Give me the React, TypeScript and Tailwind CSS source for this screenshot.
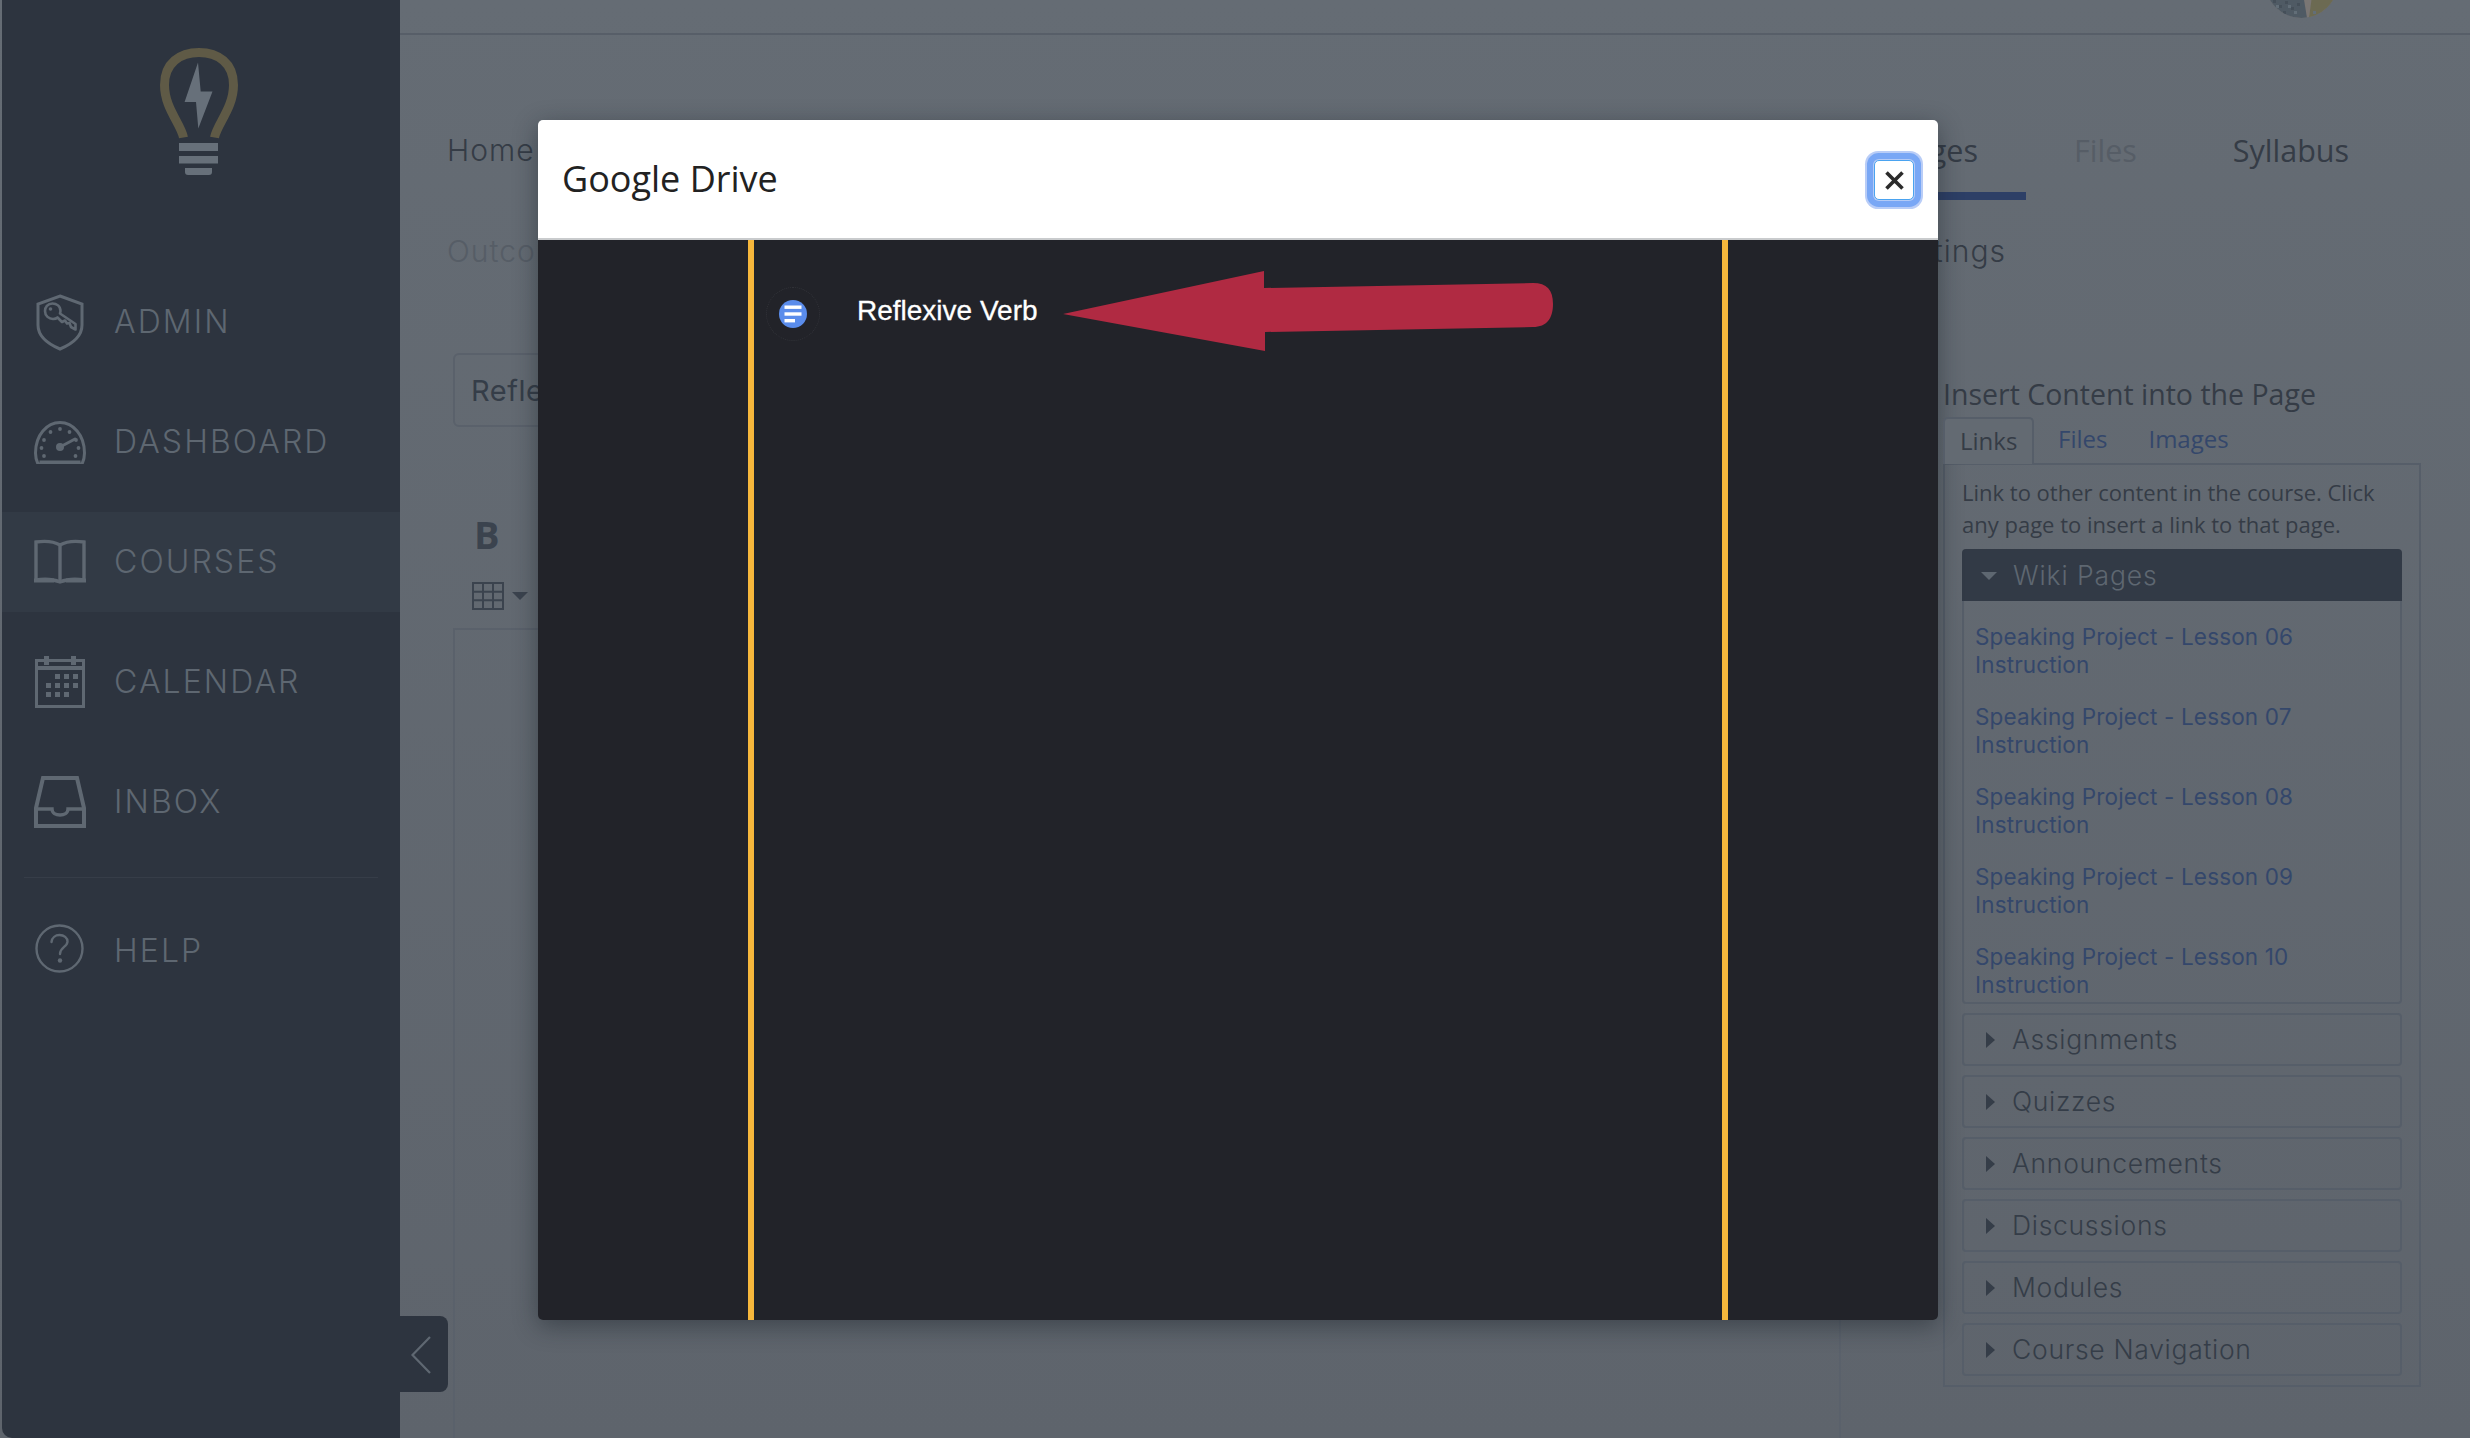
import React from "react";

const ICON = "#5f6872";

function Logo() {
  return (
    <svg width="78" height="127" viewBox="0 0 78 127" fill="none">
      <path d="M23.5 89.5C21 76 4.5 60 4.5 37C4.5 15 20 4.5 39 4.5C58 4.5 73.5 15 73.5 37C73.5 60 57 76 54.5 89.5" stroke="#5f5a46" strokeWidth="9" />
      <polygon points="38,14.5 24.6,54 36,54 38.3,80.6 52.5,43.5 40.7,43.5" fill="#67707a" />
      <rect x="19" y="95" width="39" height="8" fill="#67707a" />
      <rect x="19" y="108" width="39" height="7.5" fill="#67707a" />
      <path d="M25 120H52V124Q52 127 49 127H28Q25 127 25 124Z" fill="#67707a" />
    </svg>
  );
}

function AdminIcon() {
  return (
    <svg width="48" height="57" viewBox="0 0 48 57" fill="none" stroke={ICON} strokeWidth="3">
      <path d="M24 2L46 10V31C46 42 36 50 24 55C12 50 2 42 2 31V10Z" />
      <path d="M24.5 17C24.5 12 20.5 9.5 16.5 9.5C11.5 9.5 9 13.5 9 17C9 22 13 25 17 25C19 25 20.5 24.5 21.5 23.5L26 28L29 26.5L31 29.5L33.5 29L35 33L39.5 35.5V30L24 19.5Z" strokeWidth="2.6" strokeLinejoin="round" />
      <circle cx="14.5" cy="15" r="1.8" fill={ICON} stroke="none" />
    </svg>
  );
}

function DashIcon() {
  return (
    <svg width="52" height="43" viewBox="0 0 52 43" fill="none">
      <path d="M4 43C2 39 1.5 36 1.5 32C1.5 14 13 1.5 26 1.5C39 1.5 50.5 14 50.5 32C50.5 36 50 39 48 43Z" stroke={ICON} strokeWidth="3" strokeLinejoin="round" />
      <path d="M5.5 41H46.5" stroke={ICON} strokeWidth="3" />
      <g fill={ICON}>
        <circle cx="10" cy="19" r="1.9" /><circle cx="7.5" cy="27" r="1.9" /><circle cx="10" cy="35" r="1.9" />
        <circle cx="16.5" cy="11" r="1.9" /><circle cx="26" cy="8" r="1.9" /><circle cx="35.5" cy="11" r="1.9" />
        <circle cx="42" cy="19" r="1.9" /><circle cx="44.5" cy="27" r="1.9" /><circle cx="41.5" cy="35" r="1.9" />
        <circle cx="26" cy="26" r="4" />
      </g>
      <path d="M26 26L41 18" stroke={ICON} strokeWidth="3" strokeLinecap="round" />
    </svg>
  );
}

function BookIcon() {
  return (
    <svg width="52" height="46" viewBox="0 0 52 46" fill="none" stroke={ICON} strokeWidth="3.4">
      <path d="M26 6C20 2.5 12 1.5 2 3V41C12 39.5 20 40.5 26 43C32 40.5 40 39.5 50 41V3C40 1.5 32 2.5 26 6Z" />
      <path d="M26 6V44" />
      <path d="M0 41.5H20M32 41.5H52" strokeWidth="4" />
    </svg>
  );
}

function CalendarIcon() {
  const dots: [number, number][] = [
    [20, 18], [29, 18], [38, 18], [11, 27], [20, 27], [29, 27], [38, 27], [11, 36], [20, 36], [29, 36],
  ];
  return (
    <svg width="50" height="52" viewBox="0 0 50 52" fill="none">
      <rect x="1.5" y="4.5" width="47" height="46" stroke={ICON} strokeWidth="3" />
      <path d="M2 12H48" stroke={ICON} strokeWidth="4" />
      <rect x="9" y="0" width="5" height="9" fill={ICON} />
      <rect x="36" y="0" width="5" height="9" fill={ICON} />
      {dots.map(([x, y]) => (
        <rect key={`${x}-${y}`} x={x} y={y} width="5" height="5" fill={ICON} />
      ))}
    </svg>
  );
}

function InboxIcon() {
  return (
    <svg width="52" height="52" viewBox="0 0 52 52" fill="none" stroke={ICON} strokeWidth="4">
      <path d="M9 2H43L50 32V50H2V32Z" strokeLinejoin="miter" />
      <path d="M3 33H18C18 41 34 41 34 33H49" strokeWidth="3.4" />
    </svg>
  );
}

function HelpIcon() {
  return (
    <svg className="-translate-x-px -translate-y-[3px]" width="49" height="49" viewBox="0 0 49 49" fill="none" stroke={ICON} strokeWidth="2.4">
      <circle cx="24.5" cy="24.5" r="23" />
      <path d="M16.5 18C17 13.5 20.5 11 24.5 11C29 11 32.5 13.8 32.5 17.5C32.5 23 25 23 25 30" strokeLinecap="round" />
      <circle cx="25" cy="36.5" r="2.2" fill={ICON} stroke="none" />
    </svg>
  );
}

const navItems = [
  { label: "ADMIN", icon: <AdminIcon />, active: false },
  { label: "DASHBOARD", icon: <DashIcon />, active: false },
  { label: "COURSES", icon: <BookIcon />, active: true },
  { label: "CALENDAR", icon: <CalendarIcon />, active: false },
  { label: "INBOX", icon: <InboxIcon />, active: false },
];

function NavRow({ label, icon, active }: { label: string; icon: React.ReactNode; active?: boolean }) {
  return (
    <div className={`flex h-[100px] items-center pl-[32px] ${active ? "bg-[#323a45]" : ""}`}>
      <span className="flex w-[52px] justify-center">{icon}</span>
      <span className="ml-[28px] font-['Inter',sans-serif] text-[32px] font-light tracking-[2.1px] text-[#5e6771]">{label}</span>
    </div>
  );
}

function Sidebar() {
  return (
    <aside className="ml-[2px] flex h-full w-[398px] shrink-0 flex-col rounded-bl-[10px] bg-[#2d343f]">
      <div className="flex justify-center pt-[48px] pr-[4px]">
        <Logo />
      </div>
      <nav className="mt-[97px] flex flex-col gap-[20px]">
        {navItems.map((n) => (
          <NavRow key={n.label} {...n} />
        ))}
      </nav>
      <div className="mx-[22px] mt-[25px] h-px bg-[#363d48]" />
      <div className="mt-[23px]">
        <NavRow label="HELP" icon={<HelpIcon />} />
      </div>
    </aside>
  );
}

function Avatar() {
  return (
    <div className="-mt-[55px] h-[73px] w-[73px] overflow-hidden rounded-full">
      <svg width="73" height="73" viewBox="0 0 73 73">
        <rect width="73" height="73" fill="#7a7674" />
        <path d="M0 0H30L42 73H0Z" fill="#4f5a64" />
        <path d="M54 0H73V73H44Z" fill="#6c6a52" />
        <g fill="#454f59">
          <rect x="8" y="55" width="3" height="3" /><rect x="14" y="60" width="3" height="3" /><rect x="20" y="56" width="3" height="3" />
          <rect x="26" y="62" width="3" height="3" /><rect x="32" y="58" width="3" height="3" /><rect x="18" y="66" width="3" height="3" />
        </g>
        <g fill="#626e78">
          <rect x="11" y="60" width="3" height="3" /><rect x="23" y="60" width="3" height="3" /><rect x="29" y="66" width="3" height="3" />
          <rect x="48" y="66" width="3" height="3" />
        </g>
      </svg>
    </div>
  );
}

const wikiPages = ["06", "07", "08", "09", "10"];
const collapsed = ["Assignments", "Quizzes", "Announcements", "Discussions", "Modules", "Course Navigation"];

function InsertPanel() {
  return (
    <section className="flex w-[478px] flex-col pt-[72px] font-['Open_Sans',sans-serif]">
      <h2 className="h-[45px] text-[28.5px] leading-[45px] text-[#353c46]">Insert Content into the Page</h2>
      <div className="flex h-[46px] text-[24px] leading-[44px]">
        <span className="z-10 h-[47px] w-[91px] rounded-t-[5px] border-x-2 border-t-2 border-[#565e69] bg-[#636a72] pl-[15px] text-[#353c46]">Links</span>
        <span className="ml-[24px] text-[#34476b]">Files</span>
        <span className="ml-[41px] text-[#34476b]">Images</span>
      </div>
      <div className="flex h-[924px] flex-col border-2 border-[#565e69] px-[17px] pt-[11px]">
        <p className="h-[73px] text-[22px] leading-[32px] whitespace-nowrap text-[#353c46]">
          Link to other content in the course. Click
          <br />
          any page to insert a link to that page.
        </p>
        <div className="flex h-[52px] items-center rounded-t-[4px] bg-[#323a46] pt-[1px] pl-[19px] font-['Inter',sans-serif] text-[26.5px] font-light tracking-[0.9px] text-[#5e6771]">
          <span className="h-0 w-0 border-x-[8px] border-t-[8px] border-x-transparent border-t-[#5e6771]" />
          <span className="ml-[16px]">Wiki Pages</span>
        </div>
        <div className="flex h-[403px] flex-col gap-[24px] overflow-hidden rounded-b-[4px] border-2 border-t-0 border-[#565e69] pt-[22px] pl-[11px] font-['Inter',sans-serif] text-[22.5px] leading-[28px] tracking-[0.15px] text-[#34476b]">
          {wikiPages.map((n) => (
            <div key={n} className="shrink-0">
              Speaking Project - Lesson {n}
              <br />
              Instruction
            </div>
          ))}
        </div>
        <div className="mt-[9px] flex flex-col gap-[9px]">
          {collapsed.map((c) => (
            <div key={c} className="flex h-[53px] items-center rounded-[4px] border-2 border-[#565e69] pl-[22px] font-['Inter',sans-serif] text-[26.5px] font-light tracking-[0.7px] text-[#353d48]">
              <span className="h-0 w-0 border-y-[8px] border-l-[9px] border-y-transparent border-l-[#353d48]" />
              <span className="ml-[17px]">{c}</span>
            </div>
          ))}
        </div>
      </div>
    </section>
  );
}

function EditorColumn() {
  return (
    <section className="ml-[6px] flex w-[1388px] flex-col pt-[53px]">
      <div className="flex h-[74px] items-center rounded-[6px] border-2 border-[#5a616b] pt-[2px] pl-[16px] font-['Inter',sans-serif] text-[29px] tracking-[0.5px] text-[#353d48]">Reflexive Verb</div>
      <div className="mt-[89px] flex h-[36px] items-center pl-[21px] font-['Open_Sans',sans-serif] text-[38px] font-bold text-[#3b434e]">B</div>
      <div className="mt-[26px] flex h-[36px] items-center pl-[19px]">
        <svg width="32" height="28" viewBox="0 0 32 28" fill="none" stroke="#3b434e" strokeWidth="2">
          <rect x="1" y="1" width="30" height="26" />
          <path d="M1 9.7H31M1 18.3H31M11 1V27M21 1V27" />
        </svg>
        <span className="ml-[8px] h-0 w-0 border-x-[8px] border-t-[8px] border-x-transparent border-t-[#3b434e]" />
      </div>
      <div className="mt-[14px] flex-1 border-2 border-b-0 border-[#5a616b]" />
    </section>
  );
}

function Main() {
  return (
    <main className="relative flex h-full min-w-0 flex-1 flex-col">
      <header className="flex h-[35px] shrink-0 justify-end overflow-hidden border-b-2 border-[#575e68] pr-[132px]">
        <Avatar />
      </header>
      <nav className="mt-[75px] flex h-[90px] shrink-0 pl-[47px] font-['Open_Sans',sans-serif] text-[30.5px] leading-[80px] text-[#353c46]">
        <span className="w-[100px] font-['Inter',sans-serif] text-[30px] font-light tracking-[1px]">Home</span>
        <span className="ml-[1326px] box-border h-[90px] w-[153px] border-b-[8px] border-[#2d3f66] pr-[48px] text-right">Pages</span>
        <span className="ml-[48px] text-[#565d66]">Files</span>
        <span className="ml-[96px]">Syllabus</span>
      </nav>
      <div className="flex h-[100px] shrink-0 justify-between pr-[464px] pl-[47px] font-['Inter',sans-serif] text-[30px] leading-[103px] font-light tracking-[1px]">
        <span className="text-[#565d66]">Outcomes</span>
        <span className="text-[#353c46]">Settings</span>
      </div>
      <div className="flex min-h-0 flex-1 gap-[102px] pl-[47px]">
        <EditorColumn />
        <InsertPanel />
      </div>
      <div className="absolute bottom-[46px] left-0 flex h-[76px] w-[48px] items-center rounded-r-[8px] bg-[#2d343f] pt-[2px] pl-[11px]">
        <svg width="20" height="38" viewBox="0 0 20 38" fill="none" stroke="#5f6872" strokeWidth="2.2">
          <path d="M19 1L1.5 19L19 37" />
        </svg>
      </div>
    </main>
  );
}

function Modal() {
  return (
    <div className="absolute top-[120px] left-[538px] flex h-[1200px] w-[1400px] flex-col overflow-hidden rounded-[5px] shadow-[0_6px_24px_rgba(20,28,36,0.45)]">
      <div className="flex h-[120px] shrink-0 items-center justify-between border-b-[2px] border-[#c9cbcd] bg-white pr-[24px] pl-[24px]">
        <span className="font-['Open_Sans',sans-serif] text-[36px] text-[#222]">Google Drive</span>
        <button className="mt-[2px] flex h-[40px] w-[40px] items-center justify-center rounded-[5px] border border-[#4aa3f0] bg-white shadow-[0_0_0_1px_#b5cbf6,0_0_0_7px_#79a7f5,0_0_0_9px_#b9cdf7]">
          <svg width="19" height="19" viewBox="0 0 19 19" stroke="#2b2b2b" strokeWidth="3.6">
            <path d="M1.5 1.5L17.5 17.5M17.5 1.5L1.5 17.5" />
          </svg>
        </button>
      </div>
      <div className="relative flex min-h-0 flex-1 justify-center bg-[#222329]">
        <div className="flex h-full w-[980px] border-x-[6px] border-[#f6b73c] pt-[47px] pl-[12px]">
          <div className="flex h-[54px] w-[54px] items-center justify-center rounded-full border border-dotted border-[#33343a]">
            <svg width="28" height="28" viewBox="0 0 28 28">
              <circle cx="14" cy="14" r="14" fill="#5a8ceb" />
              <rect x="5.5" y="5.5" width="17" height="3.4" fill="#fff" />
              <rect x="5.5" y="12.3" width="17" height="3.4" fill="#fff" />
              <rect x="5.5" y="19" width="10.5" height="3.4" fill="#fff" />
            </svg>
          </div>
          <span className="ml-[37px] h-[54px] font-['Liberation_Sans',sans-serif] text-[28px] leading-[48px] text-white [-webkit-text-stroke:0.3px_white]">Reflexive Verb</span>
        </div>
        <svg className="absolute top-[28px] left-[525px]" width="492" height="84" viewBox="0 0 492 84" fill="#b02a42">
          <path d="M0 46L201 3L201 20L470 15C484 15 490 22 490 36C490 50 484 59 470 59L202 64L202 83Z" />
        </svg>
      </div>
    </div>
  );
}

export default function App() {
  return (
    <div className="relative flex h-[1438px] w-[2470px] overflow-hidden bg-gradient-to-b from-[#656c74] to-[#5e646c]">
      <Sidebar />
      <Main />
      <Modal />
    </div>
  );
}
